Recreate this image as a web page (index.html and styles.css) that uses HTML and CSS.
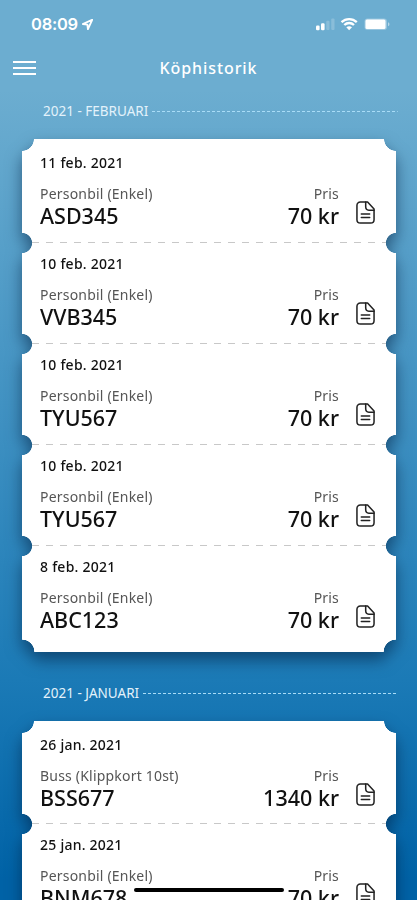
FILE: index.html
```html
<!DOCTYPE html>
<html lang="sv">
<head>
<meta charset="utf-8">
<title>Köphistorik</title>
<link rel="stylesheet" href="styles.css">
</head>
<body>
<svg class="defs" width="0" height="0">
  <symbol id="doc" viewBox="0 0 20 24">
    <path d="M12.200 1H4.600C2.500 1 1 2.500 1 4.500v15C1 21.500 2.500 23 4.600 23h10.800c2.100 0 3.600-1.500 3.600-3.500V8.400L12.200 1z"/>
    <path d="M10.200 1v4.800C10.200 8 11 9.600 13.500 9.600H19M5.600 13.600h8.800M5.600 17.300h8.800"/>
  </symbol>
</svg>
<div class="screen">
  <div class="status">
    <span class="clock">08:09</span>
    <svg class="loc" viewBox="0 0 10 10"><path d="M9.300.7.7 4.600l4.200.5.500 4.200z"/></svg>
    <svg class="signals" viewBox="0 0 76 14">
      <rect x="1" y="8.500" width="3.600" height="4.800" rx="1.200"/>
      <rect x="6" y="6.300" width="3.600" height="7" rx="1.200"/>
      <g opacity=".2"><rect x="11.300" y="3.800" width="3.200" height="9.200" rx="1"/><rect x="16.300" y="1.500" width="3.200" height="11.500" rx="1"/></g>
      <g fill="none" stroke="#fff" stroke-width="2.300"><path d="M26.500 5.200c4.400-4.200 10.900-4.200 15.300 0M29.300 8c2.800-2.700 6.900-2.700 9.700 0"/></g>
      <path d="M31.300 10.200c1.700-1.400 4-1.400 5.700 0l-2.850 3z"/>
      <rect x="49.500" y="1.500" width="22.500" height="11.500" rx="3" opacity=".3"/>
      <rect x="50.500" y="2.500" width="20" height="9.500" rx="1.500"/>
      <path d="M73 5.300c2 .8 2 3.200 0 4z" opacity=".5"/>
    </svg>
  </div>
  <header class="bar">
    <svg class="menu" viewBox="0 0 23 14"><path d="M0 1h23M0 7h23M0 13h23"/></svg>
    <h1>Köphistorik</h1>
  </header>

  <h2 class="month"><span>2021 - FEBRUARI</span><svg class="rule"><line x1="0" y1=".5" x2="100%" y2=".5"/></svg></h2>
  <div class="tickets">
    <article class="ticket"><time>11 feb. 2021</time><div class="info"><p>Personbil (Enkel)<b>ASD345</b></p><p class="price">Pris<b>70 kr</b></p><svg class="doc"><use href="#doc"/></svg></div></article>
    <article class="ticket"><time>10 feb. 2021</time><div class="info"><p>Personbil (Enkel)<b>VVB345</b></p><p class="price">Pris<b>70 kr</b></p><svg class="doc"><use href="#doc"/></svg></div></article>
    <article class="ticket"><time>10 feb. 2021</time><div class="info"><p>Personbil (Enkel)<b>TYU567</b></p><p class="price">Pris<b>70 kr</b></p><svg class="doc"><use href="#doc"/></svg></div></article>
    <article class="ticket"><time>10 feb. 2021</time><div class="info"><p>Personbil (Enkel)<b>TYU567</b></p><p class="price">Pris<b>70 kr</b></p><svg class="doc"><use href="#doc"/></svg></div></article>
    <article class="ticket"><time>8 feb. 2021</time><div class="info"><p>Personbil (Enkel)<b>ABC123</b></p><p class="price">Pris<b>70 kr</b></p><svg class="doc"><use href="#doc"/></svg></div></article>
  </div>

  <h2 class="month january"><span>2021 - JANUARI</span><svg class="rule"><line x1="0" y1=".5" x2="100%" y2=".5"/></svg></h2>
  <div class="tickets">
    <article class="ticket"><time>26 jan. 2021</time><div class="info"><p>Buss (Klippkort 10st)<b>BSS677</b></p><p class="price">Pris<b>1340 kr</b></p><svg class="doc"><use href="#doc"/></svg></div></article>
    <article class="ticket"><time>25 jan. 2021</time><div class="info"><p>Personbil (Enkel)<b>BNM678</b></p><p class="price">Pris<b>70 kr</b></p><svg class="doc"><use href="#doc"/></svg></div></article>
  </div>
  <div class="home"></div>
</div>
</body>
</html>
```

FILE: styles.css
```css
* { box-sizing: border-box; margin: 0; }
html, body { height: 900px; overflow: hidden; }
body { font-family: "Noto Sans", "Open Sans", sans-serif; color: #111; }
.defs { position: absolute; }
.screen {
  position: relative;
  height: 900px;
  overflow: hidden;
  background: linear-gradient(#6cadd0 0, #6cadd0 90px, #1b7ab6 680px, #0062a6 880px);
}
.status { display: flex; align-items: center; height: 48px; padding: 0 26px 0 31px; color: #fff; fill: #fff; }
.clock { font: 600 16.5px/20px Inter, sans-serif; letter-spacing: -0.25px; }
.loc { width: 11px; height: 11px; margin-left: 4px; fill: none; stroke: #fff; stroke-width: 1.7; stroke-linejoin: round; }
.signals { width: 76px; height: 14px; margin-left: auto; }
.bar { display: flex; align-items: center; height: 40px; padding-left: 13px; color: #fff; }
.menu { width: 23px; height: 14px; stroke: #fff; stroke-width: 1.8; }
.bar h1 { flex: 1; padding-right: 36px; font-size: 16px; font-weight: 500; text-align: center; letter-spacing: 0.9px; }
.month { display: flex; align-items: center; height: 51px; padding: 0 19px 5px 43px; color: #e3f2fb; font-size: 13.5px; font-weight: 400; white-space: nowrap; }
.rule { flex: 1; height: 1px; margin-left: 4px; stroke: #a9dcf7; stroke-dasharray: 3 2; }
.tickets { margin: 0 21px 0 22px; filter: drop-shadow(0 8px 8px rgba(0, 28, 60, 0.55)); }
.january { height: 69px; padding-top: 19px; }
.ticket {
  --top: 9.7px;
  --bottom: 9.7px;
  height: 101.2px;
  padding: 11px 21px 0 18px;
  background: #fff;
  mask:
    radial-gradient(circle at 0 0, transparent var(--top), #000 calc(var(--top) + .6px)),
    radial-gradient(circle at 100% 0, transparent var(--top), #000 calc(var(--top) + .6px)),
    radial-gradient(circle at 0 100%, transparent var(--bottom), #000 calc(var(--bottom) + .6px)),
    radial-gradient(circle at 100% 100%, transparent var(--bottom), #000 calc(var(--bottom) + .6px));
  mask-composite: intersect;
}
.ticket:first-child { --top: 11.5px; height: 103.5px; padding-top: 14px; }
.ticket:last-child { --bottom: 12px; height: 105.9px; }
.ticket:not(:last-child) {
  background: repeating-linear-gradient(90deg, #c8c8c8 0 7px, #fff 7px 14px) 10px 100% / 354px 1px no-repeat, #fff;
}
.ticket time { display: block; height: 19px; font-size: 14px; line-height: 19px; font-weight: 500; letter-spacing: 0.24px; }
.info { display: flex; margin-top: 12px; }
.info p { font-size: 14px; line-height: 20px; font-weight: 400; letter-spacing: 0.2px; color: #555; }
.info b { display: block; font-size: 21.5px; line-height: 24px; font-weight: 500; letter-spacing: 0; color: #111; }
.price { margin-left: auto; text-align: right; }
.doc { width: 19px; height: 23px; margin: 17px 0 0 17px; fill: none; stroke: #222; stroke-width: 1.6; stroke-linejoin: round; stroke-linecap: round; }
.home { position: absolute; left: 134px; top: 888px; width: 150px; height: 4px; border-radius: 2px; background: #000; }
```
